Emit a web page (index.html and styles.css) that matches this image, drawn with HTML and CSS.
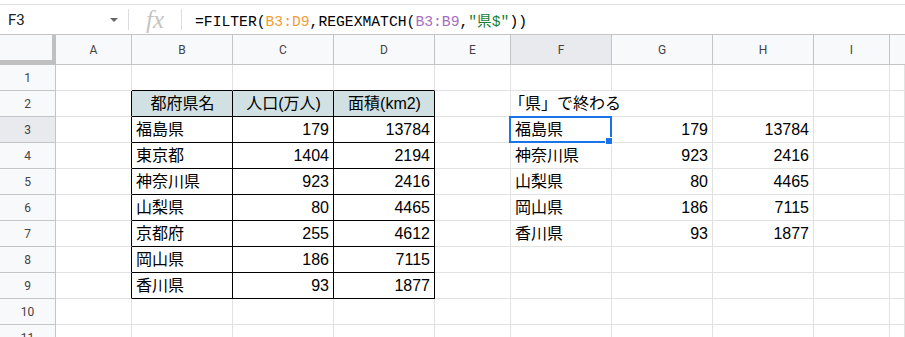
FILE: index.html
```html
<!DOCTYPE html>
<html lang="ja">
<head>
<meta charset="utf-8">
<title>Sheet</title>
<link rel="stylesheet" href="styles.css">
</head>
<body>
<div class="app">
  <div class="fbar">
    <div class="namebox"><span class="ref">F3</span><span class="tri"></span></div>
    <div class="sep"></div>
    <div class="fx">fx</div>
    <div class="sep"></div>
    <div class="formula">=FILTER(<span class="r1">B3:D9</span>,REGEXMATCH(<span class="r2">B3:B9</span>,<span class="str">"県$"</span>))</div>
  </div>
  <div class="grid">
    <div class="corner"></div>
    <div class="ch">A</div><div class="ch">B</div><div class="ch">C</div><div class="ch">D</div><div class="ch">E</div><div class="ch sel">F</div><div class="ch">G</div><div class="ch">H</div><div class="ch">I</div><div class="ch last"></div>

    <div class="rh">1</div>
    <div class="c"></div><div class="c tt"></div><div class="c tt"></div><div class="c tt"></div><div class="c"></div><div class="c"></div><div class="c"></div><div class="c"></div><div class="c"></div><div class="c"></div>

    <div class="rh">2</div>
    <div class="c tl"></div><div class="c tb hd">都府県名</div><div class="c tb hd">人口(万人)</div><div class="c tb hd">面積(km2)</div><div class="c"></div><div class="c nr"><span class="lead">「県」で終わる</span></div><div class="c"></div><div class="c"></div><div class="c"></div><div class="c"></div>

    <div class="rh sel">3</div>
    <div class="c tl"></div><div class="c tb">福島県</div><div class="c tb num">179</div><div class="c tb num">13784</div><div class="c"></div><div class="c">福島県</div><div class="c num">179</div><div class="c num">13784</div><div class="c"></div><div class="c"></div>

    <div class="rh">4</div>
    <div class="c tl"></div><div class="c tb">東京都</div><div class="c tb num">1404</div><div class="c tb num">2194</div><div class="c"></div><div class="c">神奈川県</div><div class="c num">923</div><div class="c num">2416</div><div class="c"></div><div class="c"></div>

    <div class="rh">5</div>
    <div class="c tl"></div><div class="c tb">神奈川県</div><div class="c tb num">923</div><div class="c tb num">2416</div><div class="c"></div><div class="c">山梨県</div><div class="c num">80</div><div class="c num">4465</div><div class="c"></div><div class="c"></div>

    <div class="rh">6</div>
    <div class="c tl"></div><div class="c tb">山梨県</div><div class="c tb num">80</div><div class="c tb num">4465</div><div class="c"></div><div class="c">岡山県</div><div class="c num">186</div><div class="c num">7115</div><div class="c"></div><div class="c"></div>

    <div class="rh">7</div>
    <div class="c tl"></div><div class="c tb">京都府</div><div class="c tb num">255</div><div class="c tb num">4612</div><div class="c"></div><div class="c">香川県</div><div class="c num">93</div><div class="c num">1877</div><div class="c"></div><div class="c"></div>

    <div class="rh">8</div>
    <div class="c tl"></div><div class="c tb">岡山県</div><div class="c tb num">186</div><div class="c tb num">7115</div><div class="c"></div><div class="c"></div><div class="c"></div><div class="c"></div><div class="c"></div><div class="c"></div>

    <div class="rh">9</div>
    <div class="c tl"></div><div class="c tb">香川県</div><div class="c tb num">93</div><div class="c tb num">1877</div><div class="c"></div><div class="c"></div><div class="c"></div><div class="c"></div><div class="c"></div><div class="c"></div>

    <div class="rh">10</div>
    <div class="c"></div><div class="c"></div><div class="c"></div><div class="c"></div><div class="c"></div><div class="c"></div><div class="c"></div><div class="c"></div><div class="c"></div><div class="c"></div>

    <div class="rh">11</div>
    <div class="c"></div><div class="c"></div><div class="c"></div><div class="c"></div><div class="c"></div><div class="c"></div><div class="c"></div><div class="c"></div><div class="c"></div><div class="c"></div>

    <div class="selbox"><div class="handle"></div></div>
  </div>
</div>
</body>
</html>
```

FILE: styles.css
```css
* { box-sizing: border-box; }
html, body { margin: 0; padding: 0; background: #fff; }
body { width: 905px; height: 337px; overflow: hidden; font-family: "Liberation Sans", Arial, "Noto Sans CJK JP", sans-serif; color: #000; }

.app { padding-top: 4px; }

.fbar {
  display: flex;
  align-items: center;
  height: 31px;
  border-top: 1px solid #e1e1e1;
  border-bottom: 1px solid #c4c4c4;
}
.namebox {
  width: 128px;
  display: flex;
  align-items: center;
  justify-content: space-between;
  padding: 0 10px 0 8px;
  font-family: Roboto, "Liberation Sans", sans-serif;
  font-size: 15px;
  color: #202124;
}
.tri {
  width: 0; height: 0;
  border-left: 4px solid transparent;
  border-right: 4px solid transparent;
  border-top: 4px solid #666;
}
.sep { width: 1px; height: 21px; background: #dadce0; }
.fx {
  width: 52px;
  text-align: center;
  font-family: "Liberation Serif", serif;
  font-style: italic;
  font-size: 25px;
  color: #c4c4c4;
  line-height: 20px;
}
.formula {
  padding-left: 13px;
  font-family: "Liberation Mono", "Noto Sans CJK JP", monospace;
  font-size: 14.7px;
  color: #000;
  white-space: nowrap;
}
.r1 { color: #f29d36; }
.r2 { color: #a36ec0; }
.str { color: #188038; }

.grid {
  position: relative;
  display: grid;
  grid-template-columns: 56px 76px 101px 101px 101px 76px 101px 101px 101px 76px 1fr;
  grid-template-rows: 30px repeat(11, 26px);
}
.corner {
  background: #f8f9fa;
  border-right: 4px solid #c0c0c0;
  border-bottom: 5px solid #c0c0c0;
}
.ch {
  background: #f8f9fa;
  border-right: 1px solid #c4c4c4;
  border-bottom: 1px solid #c4c4c4;
  display: flex;
  align-items: center;
  justify-content: center;
  font-family: Roboto, "Liberation Sans", sans-serif;
  font-size: 12px;
  color: #444;
}
.ch.last { border-right: none; }
.rh {
  background: #f8f9fa;
  border-right: 1px solid #c4c4c4;
  border-bottom: 1px solid #c4c4c4;
  display: flex;
  align-items: center;
  justify-content: center;
  font-family: Roboto, "Liberation Sans", sans-serif;
  font-size: 12px;
  color: #444;
}
.sel { background: #e8eaed; }

.c {
  border-right: 1px solid #e2e2e2;
  border-bottom: 1px solid #e2e2e2;
  font-size: 16px;
  line-height: 25px;
  padding: 0 3px 0 4px;
  white-space: nowrap;
  overflow: visible;
}
.num { text-align: right; padding-right: 4px; }
.hd { background: #d0e0e3; text-align: center; }
.tb { border-right-color: #000; border-bottom-color: #000; }
.tl { border-right-color: #000; }
.tt { border-bottom-color: #000; }
.nr { border-right-color: transparent; }
.lead { margin-left: -6px; }

.selbox {
  position: absolute;
  left: 509px;
  top: 81px;
  width: 103px;
  height: 27px;
  border: 2px solid #1a73e8;
}
.handle {
  position: absolute;
  right: -3px;
  bottom: -4px;
  width: 8px;
  height: 8px;
  background: #1a73e8;
  border: 1px solid #fff;
}
```
